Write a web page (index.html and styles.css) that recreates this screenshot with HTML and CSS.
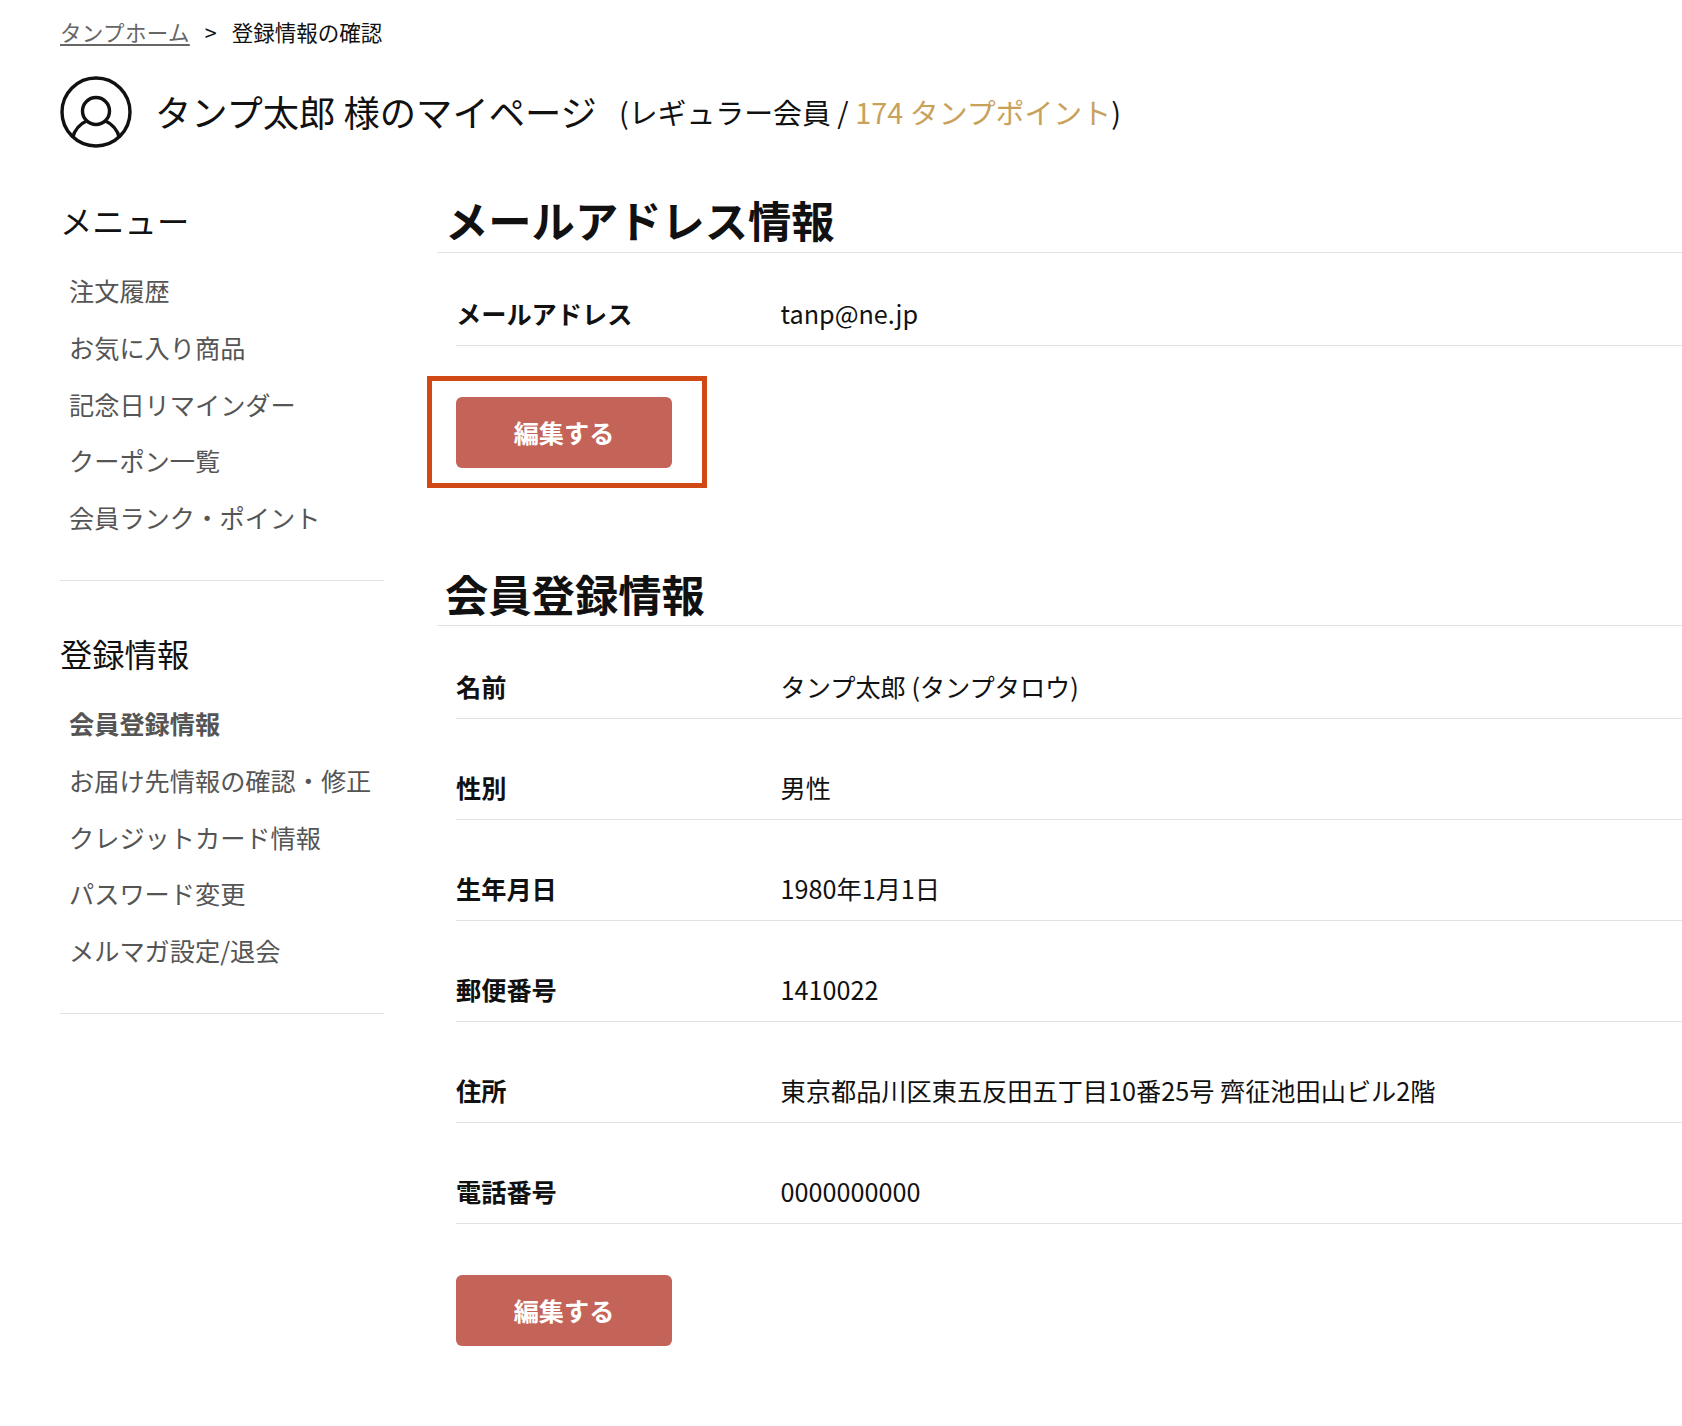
FILE: index.html
```html
<!DOCTYPE html>
<html lang="ja">
<head>
<meta charset="utf-8">
<title>マイページ</title>
<link rel="stylesheet" href="styles.css">
</head>
<body>
<nav class="crumbs"><a class="crumb-link" href="#">タンプホーム</a><span class="crumb-sep">&gt;</span><span>登録情報の確認</span></nav>
<header class="page-head">
  <svg class="avatar" viewBox="0 0 72 72" fill="none" stroke="#111" stroke-width="3.4"><circle cx="36" cy="36" r="34"/><circle cx="36" cy="35" r="13.5"/><path d="M12.5 62c2-8 7-14 15-17.500M59.500 62c-2-8-7-14-15-17.500"/></svg>
  <h1 class="page-title">タンプ太郎 様のマイページ</h1>
  <p class="page-meta">(レギュラー会員 / <span class="points">174 タンプポイント</span>)</p>
</header>
<div class="layout">
  <aside class="side">
    <section class="side-group">
      <h2 class="side-title side-title-menu">メニュー</h2>
      <ul class="side-list">
        <li>注文履歴</li><li>お気に入り商品</li><li>記念日リマインダー</li><li>クーポン一覧</li><li>会員ランク・ポイント</li>
      </ul>
    </section>
    <section class="side-group">
      <h2 class="side-title">登録情報</h2>
      <ul class="side-list">
        <li class="current">会員登録情報</li><li>お届け先情報の確認・修正</li><li>クレジットカード情報</li><li>パスワード変更</li><li>メルマガ設定/退会</li>
      </ul>
    </section>
  </aside>
  <main class="main">
    <section class="block block-mail">
      <h2 class="block-title">メールアドレス情報</h2>
      <dl class="rows">
        <div class="row"><dt>メールアドレス</dt><dd>tanp@ne.jp</dd></div>
      </dl>
      <div class="highlight"><a class="btn" href="#">編集する</a></div>
    </section>
    <section class="block">
      <h2 class="block-title block-title-tight">会員登録情報</h2>
      <dl class="rows">
        <div class="row"><dt>名前</dt><dd>タンプ太郎 (タンプタロウ)</dd></div>
        <div class="row"><dt>性別</dt><dd>男性</dd></div>
        <div class="row"><dt>生年月日</dt><dd>1980年1月1日</dd></div>
        <div class="row"><dt>郵便番号</dt><dd>1410022</dd></div>
        <div class="row"><dt>住所</dt><dd>東京都品川区東五反田五丁目10番25号 齊征池田山ビル2階</dd></div>
        <div class="row"><dt>電話番号</dt><dd>0000000000</dd></div>
      </dl>
      <div class="actions"><a class="btn" href="#">編集する</a></div>
    </section>
  </main>
</div>
</body>
</html>
```
FILE: styles.css
```css
* { box-sizing: border-box; }
html, body { margin: 0; padding: 0; }
body {
  width: 1682px;
  height: 1426px;
  overflow: hidden;
  background: #fff;
  color: #111;
  font-family: "Noto Sans CJK JP", "Noto Sans", sans-serif;
}
.crumbs {
  display: flex;
  align-items: center;
  padding: 13px 0 0 60px;
  height: 50px;
  font-size: 21.5px;
  line-height: 34px;
}
.crumb-link { color: #666; text-decoration: underline; text-underline-offset: 3px; letter-spacing: 0.35px; }
.crumb-sep { margin: 0 15px; }
.page-head { display: flex; align-items: flex-start; padding: 26px 0 0 60px; }
.avatar { width: 72px; height: 72px; flex: none; }
.page-title { margin: 0 0 0 23px; font-size: 36.3px; font-weight: 400; line-height: 70px; }
.page-meta { margin: 0 0 0 22px; font-size: 28.9px; line-height: 70px; }
.points { color: #c8a25a; }
.layout { display: flex; padding: 39px 0 0 60px; }
.side { width: 324px; flex: none; padding-top: 5px; }
.side-group { border-bottom: 1px solid #e2e2e2; padding-bottom: 34px; margin-bottom: 44px; }
.side-title { margin: 0; font-size: 32.3px; font-weight: 400; line-height: 56px; }
.side-list { list-style: none; margin: 14px 0 0; padding: 0 0 0 9px; font-size: 25.2px; line-height: 56.8px; color: #555; }
.current { font-weight: 700; }
.main { margin-left: 53px; flex: 1; min-width: 0; }
.block-title { margin: 0; padding-left: 8px; height: 66px; font-size: 43.3px; font-weight: 700; line-height: 66px; border-bottom: 1px solid #e2e2e2; }
.block-mail .block-title { line-height: 64px; }
.block-mail { height: 373px; }
.rows { margin: 0 0 0 19px; }
.row { display: flex; align-items: flex-end; height: 93px; padding-bottom: 13px; border-bottom: 1px solid #e2e2e2; font-size: 25.2px; line-height: 38px; }
.row + .row { height: 101px; }
.row dt { width: 324.6px; font-weight: 700; flex: none; }
.row dd { margin: 0; }
.highlight { width: 280px; height: 112px; border: 5px solid #cf4816; margin: 30px 0 0 -10px; padding: 16px 0 0 24px; }
.actions { padding: 51px 0 0 19px; }
.btn { display: flex; align-items: center; justify-content: center; width: 216px; height: 71px; padding-bottom: 2px; border-radius: 6px; background: #c46358; color: #fff; font-size: 25.2px; font-weight: 700; text-decoration: none; }
```
